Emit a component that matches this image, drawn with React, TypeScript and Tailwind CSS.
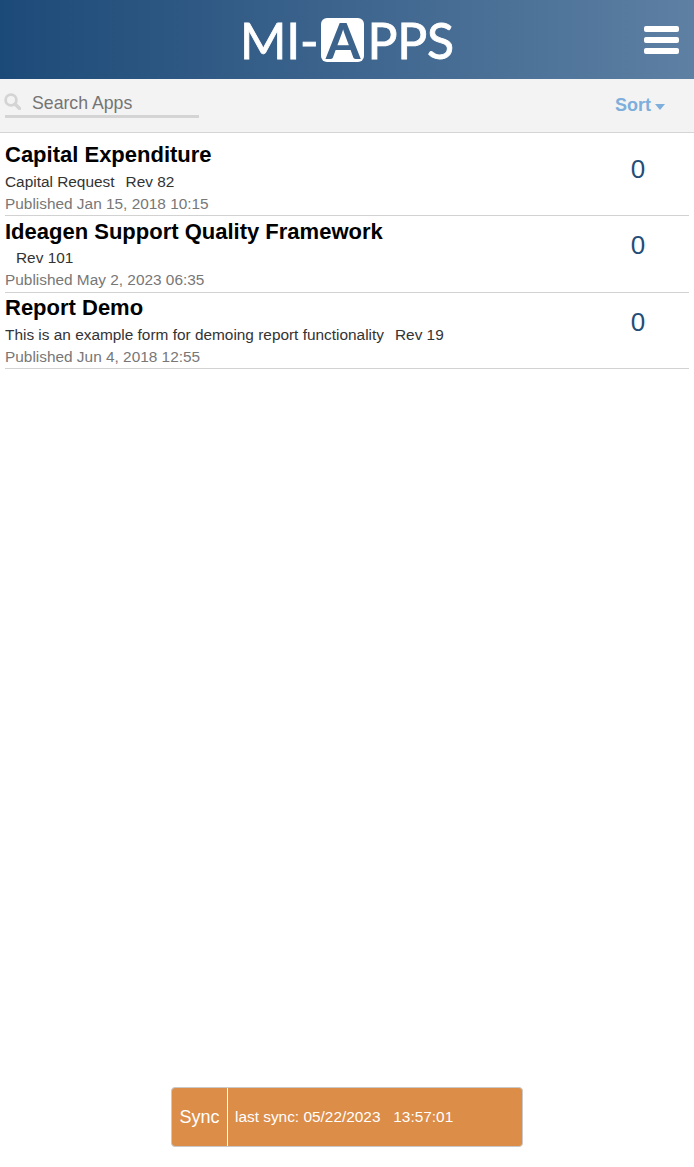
import React from "react";

const apps = [
  { title: "Capital Expenditure", desc: "Capital Request", rev: "Rev 82", pub: "Published Jan 15, 2018 10:15" },
  { title: "Ideagen Support Quality Framework", desc: "", rev: "Rev 101", pub: "Published May 2, 2023 06:35" },
  { title: "Report Demo", desc: "This is an example form for demoing report functionality", rev: "Rev 19", pub: "Published Jun 4, 2018 12:55" },
];

export default function App() {
  return (
    <div className="relative h-[1167px] w-[694px] overflow-hidden bg-white font-['Liberation_Sans',Arial,sans-serif]">
      <header className="flex h-[79px] items-center justify-between bg-gradient-to-r from-[#1c4a78] to-[#5d80a3] pl-[240px] pr-[15px]">
        <div className="flex items-center font-['Lato',sans-serif] text-[50px] leading-none tracking-[-0.2px] text-white [-webkit-text-stroke:0.8px_white]">
          <span>MI-</span>
          <span className="mx-[3px] flex h-[44px] w-[43px] items-center justify-center rounded-[6px] bg-white font-bold text-[#3b638b] [-webkit-text-stroke:0px]">A</span>
          <span>PPS</span>
        </div>
        <div className="flex w-[35px] flex-col gap-[5px]">
          <div className="h-[6px] rounded-[2px] bg-white" />
          <div className="h-[6px] rounded-[2px] bg-white" />
          <div className="h-[6px] rounded-[2px] bg-white" />
        </div>
      </header>

      <div className="flex h-[54px] items-start justify-between border-b border-[#d5d5d5] bg-[#f3f3f3] pl-[5px] pr-[28px]">
        <div className="mt-[14px] w-[194px] border-b-[3px] border-[#d4d4d4] pb-[2px]">
          <div className="flex items-center gap-[10px]">
            <svg width="17" height="17" viewBox="0 0 17 17" fill="none" stroke="#d4d4d4" className="mt-[-4px] ml-[-1px] mr-[1px]">
              <circle cx="7" cy="7" r="5.4" strokeWidth="2.8" />
              <path d="M11 11l4.5 4.5" strokeWidth="3.4" strokeLinecap="round" />
            </svg>
            <span className="text-[17.7px] leading-[20px] text-[#757575]">Search Apps</span>
          </div>
        </div>
        <div className="mt-[16px] flex items-center gap-[4px] pr-[1px] text-[18px] font-bold leading-[21px] text-[#7eaedb]">
          <span>Sort</span>
          <span className="mt-[2px] h-0 w-0 border-x-[5.5px] border-t-[6px] border-x-transparent border-t-[#7eaedb]" />
        </div>
      </div>

      <ul className="pl-[5px] pr-[5px] pt-[6.5px]">
        {apps.map((a) => (
          <li key={a.title} className="flex h-[76.5px] border-b border-[#d2d2d2]">
            <div className="min-w-0 flex-1 pt-[2.5px]">
              <div className="text-[22px] font-bold leading-[26px] text-black">{a.title}</div>
              <div className="mt-[3.5px] flex h-[20px] items-center text-[15.4px] leading-[20px] text-[#333333]">
                <span>{a.desc}</span>
                <span className="ml-[11px]">{a.rev}</span>
              </div>
              <div className="mt-[3px] text-[15.4px] leading-[18px] text-[#777777]">{a.pub}</div>
            </div>
            <div className="w-[100px] pr-[2px] pt-[14px] text-center text-[26px] leading-[30px] text-[#1f4e79]">0</div>
          </li>
        ))}
      </ul>

      <div className="absolute bottom-[20px] left-[171px] flex h-[60px] w-[352px] items-stretch rounded-[4px] border border-[#c9c9c9] bg-[#dc8d48] text-white">
        <div className="flex w-[56px] items-center justify-center border-r border-white text-[18px]">Sync</div>
        <div className="flex items-center pl-[7px] text-[15.4px]">last sync: 05/22/2023&nbsp;&nbsp; 13:57:01</div>
      </div>
    </div>
  );
}
